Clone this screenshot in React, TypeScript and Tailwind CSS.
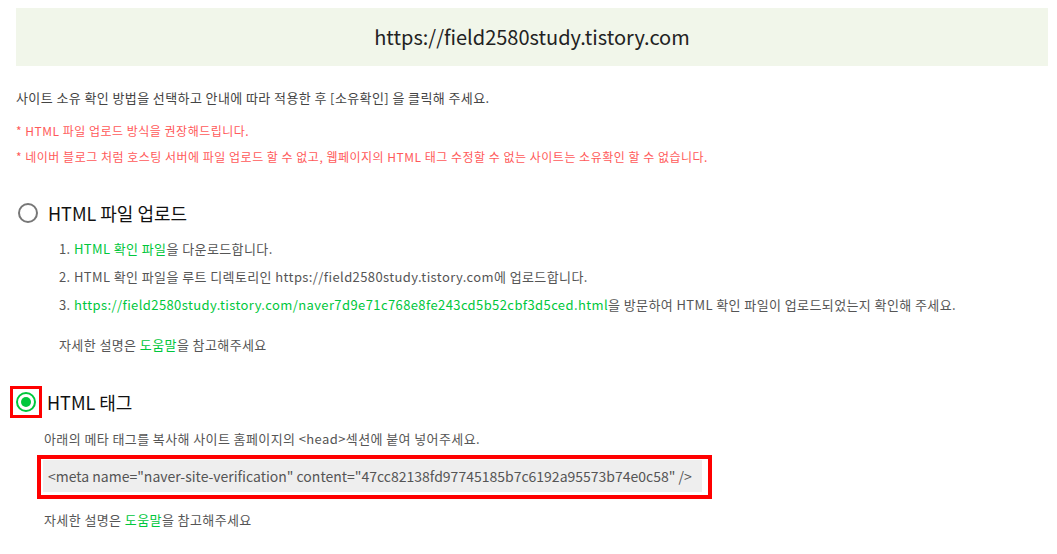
import React from "react";

const G = "text-[#00c73c]";

export default function App() {
  return (
    <div className="w-[1057px] h-[554px] bg-white overflow-hidden font-['Noto_Sans_CJK_KR','Noto_Sans',sans-serif] text-[#555]">
      <div className="ml-4 mr-[9px] mt-2 h-[58px] bg-[#f1f6ea] flex items-center justify-center text-[20px] text-[#222]">
        https://field2580study.tistory.com
      </div>
      <div className="px-4">
        <p className="mt-[22px] text-[13px] leading-[20px] tracking-[0.4px] text-[#444]">
          사이트 소유 확인 방법을 선택하고 안내에 따라 적용한 후 [소유확인] 을 클릭해 주세요.
        </p>
        <div className="mt-[10px] text-[12px] leading-[26px] tracking-[0.5px] text-[#ff5a5a]">
          <p>* HTML 파일 업로드 방식을 권장해드립니다.</p>
          <p>* 네이버 블로그 처럼 호스팅 서버에 파일 업로드 할 수 없고, 웹페이지의 HTML 태그 수정할 수 없는 사이트는 소유확인 할 수 없습니다.</p>
        </div>
      </div>

      <div className="mt-[29px] pl-[18px] flex items-center gap-[10px] h-[28px]">
        <span className="w-[20px] h-[20px] rounded-full border-2 border-[#777] bg-white" />
        <span className="text-[18px] text-[#111]">HTML 파일 업로드</span>
      </div>
      <div className="pl-[59px] mt-[8px] text-[13px] leading-[28px] tracking-[0.4px]">
        <p>1. <span className={G}>HTML 확인 파일</span>을 다운로드합니다.</p>
        <p>2. HTML 확인 파일을 루트 디렉토리인 https://field2580study.tistory.com에 업로드합니다.</p>
        <p>
          3. <span className={G}>https://field2580study.tistory.com/naver7d9e71c768e8fe243cd5b52cbf3d5ced.html</span>을 방문하여 HTML 확인 파일이 업로드되었는지 확인해 주세요.
        </p>
        <p className="mt-[16px] leading-[20px]">
          자세한 설명은 <span className={G}>도움말</span>을 참고해주세요
        </p>
      </div>

      <div className="mt-[31px] pl-[10px] flex items-center gap-[5px]">
        <span className="w-[32px] h-[32px] border-[3px] border-[#f00] flex items-center justify-center">
          <span className="w-[20px] h-[20px] rounded-full border-2 border-[#00c73c] bg-white flex items-center justify-center">
            <span className="w-[10px] h-[10px] rounded-full bg-[#00c73c]" />
          </span>
        </span>
        <span className="text-[18px] text-[#111]">HTML 태그</span>
      </div>
      <div className="pl-[44px] text-[13px] tracking-[0.4px]">
        <p className="mt-[11px] leading-[20px]">
          아래의 메타 태그를 복사해 사이트 홈페이지의 &lt;head&gt;섹션에 붙여 넣어주세요.
        </p>
      </div>
      <div className="ml-[37px] mt-[6px] w-[675px] h-[44px] border-[4px] border-[#f00] pl-[2px] pt-[1px]">
        <div className="w-[659px] h-[32px] bg-[#eeeeee] flex items-center pl-[5px] text-[14px] text-[#555]">
          &lt;meta name="naver-site-verification" content="47cc82138fd97745185b7c6192a95573b74e0c58" /&gt;
        </div>
      </div>
      <p className="pl-[44px] mt-[11px] text-[13px] leading-[20px] tracking-[0.4px]">
        자세한 설명은 <span className={G}>도움말</span>을 참고해주세요
      </p>
    </div>
  );
}
